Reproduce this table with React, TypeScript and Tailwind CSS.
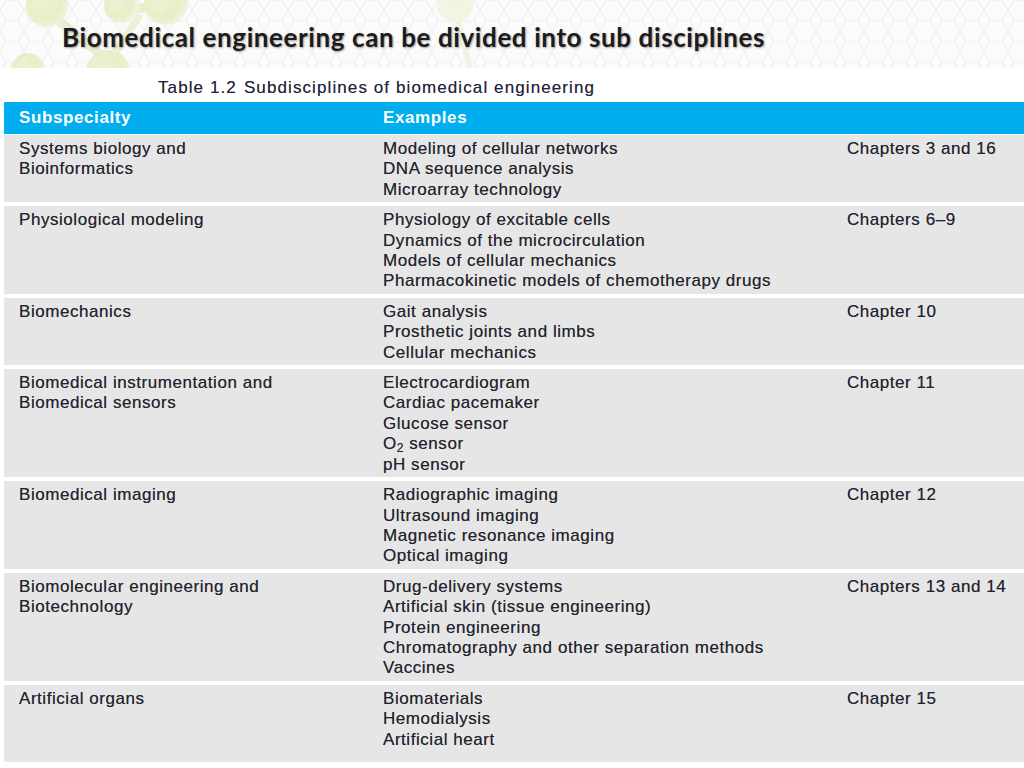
import React from "react";

type Row = { sub: string[]; ex: React.ReactNode[]; ch: string; last?: boolean };

const rows: Row[] = [
  {
    sub: ["Systems biology and", "Bioinformatics"],
    ex: ["Modeling of cellular networks", "DNA sequence analysis", "Microarray technology"],
    ch: "Chapters 3 and 16",
  },
  {
    sub: ["Physiological modeling"],
    ex: [
      "Physiology of excitable cells",
      "Dynamics of the microcirculation",
      "Models of cellular mechanics",
      "Pharmacokinetic models of chemotherapy drugs",
    ],
    ch: "Chapters 6\u20139",
  },
  {
    sub: ["Biomechanics"],
    ex: ["Gait analysis", "Prosthetic joints and limbs", "Cellular mechanics"],
    ch: "Chapter 10",
  },
  {
    sub: ["Biomedical instrumentation and", "Biomedical sensors"],
    ex: [
      "Electrocardiogram",
      "Cardiac pacemaker",
      "Glucose sensor",
      <span key="o2">
        O<sub className="text-[12px] relative top-[3px] align-baseline">2</sub> sensor
      </span>,
      "pH sensor",
    ],
    ch: "Chapter 11",
  },
  {
    sub: ["Biomedical imaging"],
    ex: ["Radiographic imaging", "Ultrasound imaging", "Magnetic resonance imaging", "Optical imaging"],
    ch: "Chapter 12",
  },
  {
    sub: ["Biomolecular engineering and", "Biotechnology"],
    ex: [
      "Drug-delivery systems",
      "Artificial skin (tissue engineering)",
      "Protein engineering",
      "Chromatography and other separation methods",
      "Vaccines",
    ],
    ch: "Chapters 13 and 14",
  },
  {
    sub: ["Artificial organs"],
    ex: ["Biomaterials", "Hemodialysis", "Artificial heart"],
    ch: "Chapter 15",
    last: true,
  },
];

function Decoration() {
  return (
    <svg className="absolute inset-0" width="1024" height="68" viewBox="0 0 1024 68">
      <defs>
        <pattern id="hex" width="24" height="41.57" patternUnits="userSpaceOnUse">
          <path
            d="M6 0 L18 0 L24 10.39 L18 20.78 L6 20.78 L0 10.39 Z M18 20.78 L24 31.18 L18 41.57 M6 20.78 L0 31.18 L6 41.57"
            fill="none"
            stroke="#ededed"
            strokeWidth="1"
          />
        </pattern>
        <radialGradient id="ball" cx="0.4" cy="0.4" r="0.6">
          <stop offset="0" stopColor="#e9f0c9" />
          <stop offset="0.7" stopColor="#dfeab0" />
          <stop offset="1" stopColor="#ebf1d2" />
        </radialGradient>
      </defs>
      <rect width="1024" height="68" fill="#fbfbfb" />
      <rect width="1024" height="68" fill="url(#hex)" />
      <g opacity="0.7">
        <line x1="55" y1="18" x2="105" y2="58" stroke="#e3ecc0" strokeWidth="9" />
        <line x1="125" y1="10" x2="165" y2="5" stroke="#e3ecc0" strokeWidth="9" />
        <line x1="140" y1="15" x2="110" y2="60" stroke="#e6eec8" strokeWidth="7" />
        <line x1="455" y1="10" x2="470" y2="68" stroke="#eef3d6" strokeWidth="6" />
        <circle cx="47" cy="6" r="21" fill="url(#ball)" />
        <circle cx="121" cy="6" r="17" fill="url(#ball)" />
        <circle cx="166" cy="3" r="22" fill="url(#ball)" />
        <circle cx="28" cy="70" r="17" fill="url(#ball)" />
        <circle cx="108" cy="72" r="22" fill="url(#ball)" />
        <circle cx="455" cy="4" r="18" fill="#eef3d8" />
      </g>
    </svg>
  );
}

export default function App() {
  const body =
    "text-[17px] leading-[20.4px] tracking-[0.55px] text-[#24242e] [text-shadow:0_0_0.6px_rgba(20,20,30,0.6)]";
  return (
    <div
      className="w-[1024px] h-[768px] bg-white overflow-hidden"
      style={{ fontFamily: "'Liberation Sans', Arial, sans-serif" }}
    >
      <div className="relative h-[68px]">
        <Decoration />
        <h1
          className="relative pl-[62px] pt-[21px] text-[26px] leading-[32px] tracking-[0.6px] font-bold text-[#1c1c1c] [text-shadow:1px_1px_2px_rgba(0,0,0,0.35)]"
          style={{ fontFamily: "Lato, 'Open Sans', sans-serif" }}
        >
          Biomedical engineering can be divided into sub disciplines
        </h1>
      </div>

      <div className="mt-[10px] h-[20px] pl-[158px] text-[17px] leading-[20px] tracking-[1.1px] text-[#24243a] [text-shadow:0_0_0.6px_rgba(20,20,30,0.5)]">
        Table 1.2<span className="ml-[7px]">Subdisciplines of biomedical engineering</span>
      </div>

      <div className="ml-[4px] mt-[4px] flex flex-col">
        <div className="flex h-[32px] items-center bg-[#00adee] pl-[15px] text-[17px] font-bold tracking-[0.6px] text-white">
          <div className="w-[364px]">Subspecialty</div>
          <div>Examples</div>
        </div>
        <div className="mt-[1px] flex flex-col gap-[4px]">
          {rows.map((r, i) => (
            <div
              key={i}
              className={`flex bg-[#e6e6e6] pl-[15px] pt-[4px] ${r.last ? "pb-[12px]" : "pb-[2px]"} ${body}`}
            >
              <div className="w-[364px] flex flex-col">
                {r.sub.map((s, j) => (
                  <div key={j}>{s}</div>
                ))}
              </div>
              <div className="w-[464px] flex flex-col">
                {r.ex.map((s, j) => (
                  <div key={j} className="whitespace-nowrap">
                    {s}
                  </div>
                ))}
              </div>
              <div className="whitespace-nowrap">{r.ch}</div>
            </div>
          ))}
        </div>
      </div>
    </div>
  );
}
